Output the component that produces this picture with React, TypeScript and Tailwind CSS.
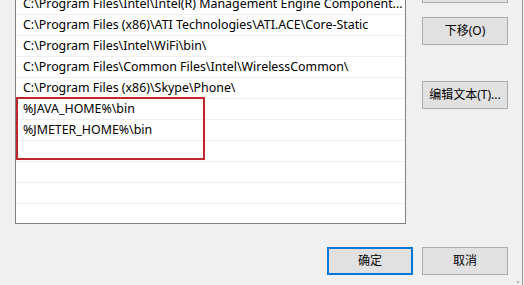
import React from "react";

const rows = [
  "C:\\Program Files\\Intel\\Intel(R) Management Engine Component...",
  "C:\\Program Files (x86)\\ATI Technologies\\ATI.ACE\\Core-Static",
  "C:\\Program Files\\Intel\\WiFi\\bin\\",
  "C:\\Program Files\\Common Files\\Intel\\WirelessCommon\\",
  "C:\\Program Files (x86)\\Skype\\Phone\\",
  "%JAVA_HOME%\\bin",
  "%JMETER_HOME%\\bin",
  "",
  "",
  "",
  "",
];

function Btn({ label, primary }: { label: string; primary?: boolean }) {
  return (
    <div
      className={
        "w-[86px] h-[28px] shrink-0 flex items-center justify-center bg-[#e1e1e1] text-[12px] text-black " +
        (primary ? "border-2 border-[#0078d7]" : "border border-[#adadad]")
      }
    >
      {label}
    </div>
  );
}

export default function App() {
  return (
    <div
      className="relative w-[524px] h-[285px] overflow-hidden bg-[#f0f0f0] flex flex-row"
      style={{ fontFamily: '"Noto Sans", "Noto Sans CJK SC", sans-serif' }}
    >
      <div className="w-[522px] h-[285px] flex flex-col">
        <div className="flex flex-row h-[224px]">
          <div className="relative ml-[15px] mt-[-7px] w-[391px] h-[231px] border border-[#828282] bg-white overflow-hidden">
            {rows.map((r, i) => (
              <div
                key={i}
                className="h-[21px] border-b border-[#f0f0f0] pl-[7px] text-[12.4px] leading-[20px] text-black whitespace-nowrap overflow-hidden"
              >
                {r}
              </div>
            ))}
            <div className="absolute left-0 top-[103px] w-[189px] h-[63px] border-2 border-[#c0272d]" />
          </div>
          <div className="ml-[16px] mt-[-25px] flex flex-col">
            <Btn label="上移(U)" />
            <div className="mt-[14px]">
              <Btn label="下移(O)" />
            </div>
            <div className="mt-[36px]">
              <Btn label="编辑文本(T)..." />
            </div>
          </div>
        </div>
        <div className="flex flex-row ml-[327px] mt-[23px] gap-[9px]">
          <Btn label="确定" primary />
          <Btn label="取消" />
        </div>
      </div>
      <div className="w-px h-[285px] bg-[#9a9a9a]" />
      <div className="w-px h-[285px] bg-[#f0f0f0]" />
      <div className="absolute left-[517px] top-[281px] w-[2px] h-[2px] bg-[#b4b4b4]" />
    </div>
  );
}
